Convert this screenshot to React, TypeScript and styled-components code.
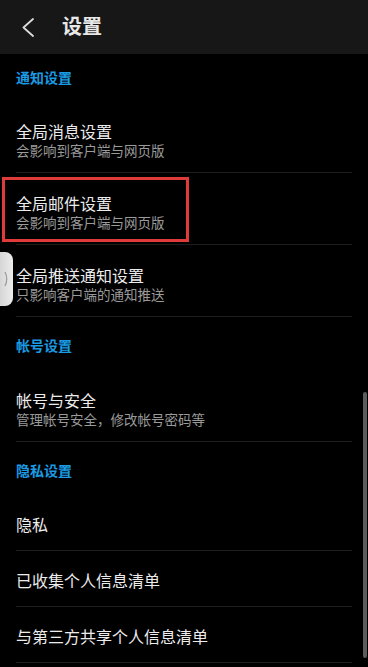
import { styled, createGlobalStyle } from 'styled-components'

const Global = createGlobalStyle`
  html, body {
    margin: 0;
    padding: 0;
    background: #000;
  }
  body {
    font-family: "Liberation Sans", "Noto Sans CJK SC", sans-serif;
    -webkit-font-smoothing: antialiased;
  }
`

const Screen = styled.div`
  position: relative;
  width: 368px;
  height: 667px;
  overflow: hidden;
  background: #000;
`

const Header = styled.header`
  height: 54px;
  background: #171717;
  display: flex;
  align-items: center;
  padding-left: 20px;
  box-sizing: border-box;
`

const Back = styled.button`
  width: 16px;
  height: 22px;
  padding: 0;
  margin: 0 26px 0 0;
  border: 0;
  background: none;
  display: flex;
  align-items: center;
  justify-content: center;
`

const Title = styled.h1`
  margin: 0;
  font-size: 20px;
  font-weight: 700;
  color: #e8e8e8;
  line-height: 26px;
`

const SectionLabel = styled.div<{ $first?: boolean }>`
  height: ${(p) => (p.$first ? 47 : 53)}px;
  box-sizing: border-box;
  padding: ${(p) => (p.$first ? 14 : 19)}px 16px 0;
  font-size: 14px;
  line-height: 20px;
  font-weight: 700;
  color: #1a9be3;
`

const Row = styled.div<{ $tall?: boolean; $marked?: boolean }>`
  position: relative;
  margin: 0 16px;
  height: ${(p) => (p.$tall ? 72 : 56)}px;
  box-sizing: border-box;
  padding-top: ${(p) => (p.$tall ? 22 : 21)}px;
  border-bottom: 1px solid #1d1d1d;
  display: flex;
  flex-direction: column;

  ${(p) =>
    p.$marked &&
    `
    &::after {
      content: '';
      position: absolute;
      left: -14px;
      top: 4px;
      width: 187px;
      height: 65px;
      box-sizing: border-box;
      border: 3px solid #df3b3b;
    }
  `}
`

const RowTitle = styled.div`
  font-size: 16px;
  line-height: 20px;
  color: #ececec;
`

const RowSub = styled.div`
  font-size: 13.5px;
  line-height: 18px;
  color: #9a9a9a;
`

const Handle = styled.div`
  position: absolute;
  left: 0;
  top: 252px;
  width: 13px;
  height: 54px;
  border-radius: 0 8px 8px 0;
  background: linear-gradient(90deg, #d6d6d6, #ececec);
  display: flex;
  align-items: center;
  justify-content: center;
`

const Scrollbar = styled.div`
  position: absolute;
  right: 1px;
  top: 392px;
  width: 4px;
  height: 266px;
  border-radius: 2px;
  background: #5c5c5c;
`

type Item = { title: string; sub?: string; marked?: boolean }

const sections: { label: string; items: Item[] }[] = [
  {
    label: '通知设置',
    items: [
      { title: '全局消息设置', sub: '会影响到客户端与网页版' },
      { title: '全局邮件设置', sub: '会影响到客户端与网页版', marked: true },
      { title: '全局推送通知设置', sub: '只影响客户端的通知推送' },
    ],
  },
  {
    label: '帐号设置',
    items: [{ title: '帐号与安全', sub: '管理帐号安全，修改帐号密码等' }],
  },
  {
    label: '隐私设置',
    items: [
      { title: '隐私' },
      { title: '已收集个人信息清单' },
      { title: '与第三方共享个人信息清单' },
    ],
  },
]

export default function App() {
  return (
    <Screen>
      <Global />
      <Header>
        <Back aria-label="返回">
          <svg width="12" height="19" viewBox="0 0 12 19">
            <polyline
              points="11,1 1.5,9.5 11,18"
              fill="none"
              stroke="#dcdcdc"
              strokeWidth="1.8"
              strokeLinecap="round"
              strokeLinejoin="round"
            />
          </svg>
        </Back>
        <Title>设置</Title>
      </Header>
      {sections.map((s, i) => (
        <section key={s.label}>
          <SectionLabel $first={i === 0}>{s.label}</SectionLabel>
          {s.items.map((it) => (
            <Row key={it.title} $tall={!!it.sub} $marked={it.marked}>
              <RowTitle>{it.title}</RowTitle>
              {it.sub && <RowSub>{it.sub}</RowSub>}
            </Row>
          ))}
        </section>
      ))}
      <Handle>
        <svg width="5" height="16" viewBox="0 0 5 16">
          <path d="M1 1 Q4.5 8 1 15" fill="none" stroke="#9a9a9a" strokeWidth="1.2" />
        </svg>
      </Handle>
      <Scrollbar />
    </Screen>
  )
}
